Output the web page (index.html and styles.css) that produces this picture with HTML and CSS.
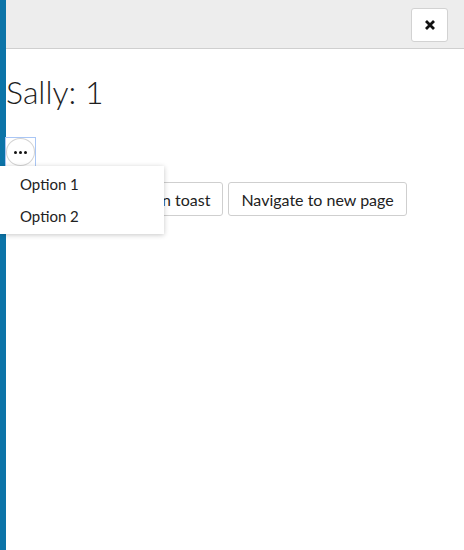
FILE: index.html
```html
<!DOCTYPE html>
<html>
<head>
<meta charset="utf-8">
<link rel="stylesheet" href="styles.css">
</head>
<body>
<div class="app">
  <div class="rail"></div>
  <div class="page">
    <header class="topbar">
      <button class="close-btn" aria-label="Close">
        <svg width="12" height="12" viewBox="0 0 12 12"><path d="M2 2 L10 10 M10 2 L2 10" stroke="#111" stroke-width="2.8" stroke-linecap="butt"/></svg>
      </button>
    </header>
    <main class="content">
      <h1 class="title">Sally: 1</h1>
      <div class="menu-wrap">
        <button class="more-btn" aria-label="More">
          <span class="dot"></span><span class="dot"></span><span class="dot"></span>
        </button>
        <ul class="menu">
          <li class="menu-item">Option 1</li>
          <li class="menu-item">Option 2</li>
        </ul>
      </div>
      <div class="actions">
        <button class="btn">Show a notification in toast</button>
        <button class="btn">Navigate to new page</button>
      </div>
    </main>
  </div>
</div>
</body>
</html>
```
FILE: styles.css
```css
html, body {
  margin: 0;
  padding: 0;
  height: 100%;
}
body {
  font-family: Lato, "Open Sans", sans-serif;
  color: #222;
  background: #fff;
}
.app {
  display: flex;
  height: 100%;
}
.rail {
  width: 6px;
  flex: none;
  background: #0c74a8;
}
.page {
  flex: 1;
  display: flex;
  flex-direction: column;
}
.topbar {
  height: 49px;
  box-sizing: border-box;
  background: #ededed;
  border-bottom: 1px solid #cfcfcf;
  display: flex;
  justify-content: flex-end;
  align-items: flex-start;
  padding: 8px 16px 0 0;
}
.close-btn {
  width: 37px;
  height: 34px;
  background: #fff;
  border: 1px solid #d2d2d2;
  border-radius: 3px;
  display: flex;
  align-items: center;
  justify-content: center;
  padding: 0;
}
.content {
  display: flex;
  flex-direction: column;
  align-items: flex-start;
}
.title {
  font-family: Lato, sans-serif;
  font-weight: 300;
  font-size: 32px;
  line-height: 38px;
  margin: 24px 0 0 0;
  color: #1e1e1e;
}
.menu-wrap {
  position: relative;
  margin-top: 27px;
  outline: 1px solid #a9c6f5;
}
.more-btn {
  width: 29px;
  height: 28px;
  border-radius: 50%;
  border: 1px solid #d4d4d4;
  background: #fff;
  display: flex;
  align-items: center;
  justify-content: center;
  gap: 2px;
  padding: 0;
}
.dot {
  width: 3px;
  height: 3px;
  border-radius: 50%;
  background: #111;
}
.menu {
  position: absolute;
  top: 100%;
  left: -6px;
  width: 164px;
  margin: 0;
  padding: 2px 0;
  list-style: none;
  background: #fff;
  box-shadow: 0 1px 5px rgba(0,0,0,0.22);
  z-index: 10;
}
.menu-item {
  font-size: 15px;
  line-height: 32px;
  padding-left: 20px;
  color: #222;
}
.actions {
  display: flex;
  gap: 5px;
  margin-top: 16px;
}
.btn {
  font-family: Lato, sans-serif;
  font-size: 16px;
  color: #222;
  background: #fff;
  border: 1px solid #cfcfcf;
  border-radius: 3px;
  height: 34px;
  padding: 0 12px;
}
```
